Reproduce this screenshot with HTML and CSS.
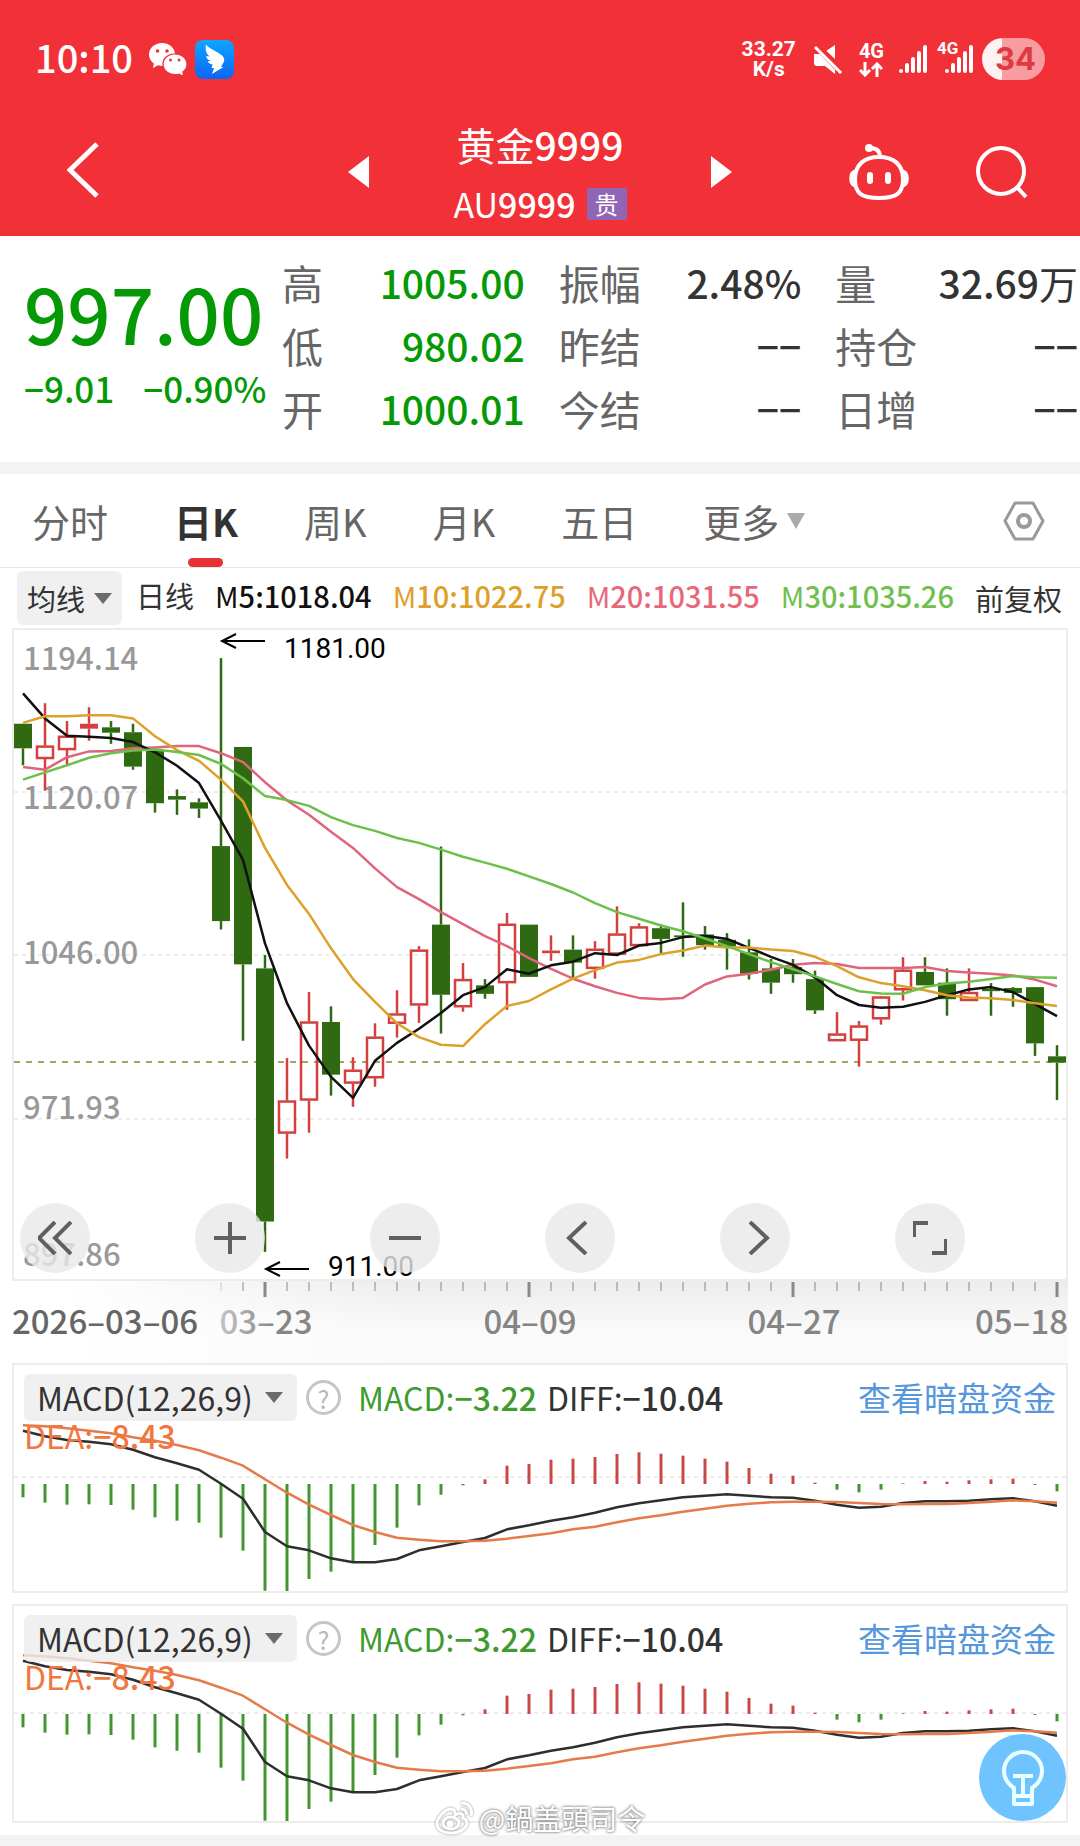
FILE: index.html
```
<!DOCTYPE html>
<html lang="zh-CN">
<head>
    <meta charset="utf-8">
    <meta name="viewport" content="width=device-width, initial-scale=1">
    <title>黄金9999</title>
    <link rel="stylesheet" href="styles.css">
</head>
<body>
    <header class="header">
        <div class="status">
            <div class="status-left">
                <span class="clock">10:10</span>
                <svg class="wechat" width="38" height="32" viewBox="0 0 38 32" fill="#fff">
                    <path d="M13 0C5.800 0 0 5 0 11.500c0 3.700 1.900 6.800 4.800 8.900L4 25l5-2.700c1.300.4 3 .6 4.600.6-1.500-7 4.400-12.800 12.400-12.500C25.300 4.400 19.900 0 13 0z"/>
                    <path d="M26 11.500c-6.400 0-11.300 4.400-11.300 9.700S19.600 31 26 31c1.400 0 2.700-.2 4-.6l4 2-.8-3.700c2.600-1.700 4.200-4.400 4.200-7.400 0-5.400-5-9.800-11.400-9.800z"/>
                    <g fill="#f23037"><circle cx="8.500" cy="8" r="1.800"/><circle cx="18" cy="8" r="1.800"/><circle cx="21.500" cy="17" r="1.500"/><circle cx="30" cy="17" r="1.500"/></g>
                </svg>
                <svg width="39" height="39" viewBox="0 0 39 39">
                    <defs><linearGradient id="wing" x1="0" y1="0" x2="0" y2="1"><stop offset="0" stop-color="#0fa6ff"/><stop offset="1" stop-color="#0b66f5"/></linearGradient></defs>
                    <rect width="39" height="39" rx="8" fill="url(#wing)"/>
                    <path d="M11 4.500c3 4.500 11 6.500 16 11 2.500 2.200 2.800 4.200 1.500 7l-2.500 4.500h2.500L17 34l2-6h-2.500l1-3.500c-3-.5-4.200-2-4.700-3.300l3-.2c-3-1-4.400-3-4.700-5l3.400.6C11 13.500 10 9 11 4.500z" fill="#fff"/>
                </svg>
            </div>
            <div class="status-right">
                <span class="speed">33.27<br>K/s</span>
                <svg width="30" height="30" viewBox="0 0 30 30" fill="#fff">
                    <path d="M22 1v14l-9-8zM1 10h7l14 15v5l-10-8H4c-2 0-3-1-3-3z"/>
                    <path d="M4 2l25 26" stroke="#f23037" stroke-width="7"/>
                    <path d="M2 3l26 26" stroke="#fff" stroke-width="3"/>
                </svg>
                <span class="net">4G
                    <svg width="24" height="15" viewBox="0 0 24 15" fill="none" stroke="#fff" stroke-width="3"><path d="M6 0v13M1 8l5 5 5-5M18 15V2M13 7l5-5 5 5"/></svg>
                </span>
                <svg width="28" height="28" viewBox="0 0 28 28" stroke="#fff" stroke-width="4" stroke-linecap="round"><path d="M2 26v0M8 20v6M14 14v12M20 8v18M26 2v24"/></svg>
                <span class="sim">
                    <span class="sim-label">4G</span>
                    <svg width="28" height="28" viewBox="0 0 28 28" stroke="#fff" stroke-width="4" stroke-linecap="round"><path d="M2 26v0M8 20v6M14 14v12M20 8v18M26 2v24"/></svg>
                </span>
                <span class="battery">34</span>
            </div>
        </div>
        <nav class="nav">
            <div class="nav-left">
                <button class="icon-btn" aria-label="返回"><svg width="32" height="56" viewBox="0 0 32 56" fill="none" stroke="#fff" stroke-width="5"><path d="M30 2L3 28l27 26"/></svg></button>
            </div>
            <div class="nav-center">
                <button class="icon-btn" aria-label="上一个"><svg width="21" height="32" viewBox="0 0 21 32" fill="#fff"><path d="M21 0v32L0 16z"/></svg></button>
                <div class="title">
                    <h1>黄金<b>9999</b></h1>
                    <p>AU<b>9999</b><span class="badge">贵</span></p>
                </div>
                <button class="icon-btn" aria-label="下一个"><svg width="21" height="32" viewBox="0 0 21 32" fill="#fff"><path d="M0 0v32l21-16z"/></svg></button>
            </div>
            <div class="nav-right">
                <button class="icon-btn" aria-label="助手">
                    <svg width="62" height="58" viewBox="0 0 62 58" fill="none" stroke="#fff" stroke-width="4">
                        <path d="M31 14c14 0 24 7 24 22s-7 19-24 19S7 51 7 36s10-22 24-22z"/>
                        <path d="M32 14c0-6-3-9-10-9" stroke-width="4"/>
                        <circle cx="21" cy="5" r="4" fill="#fff" stroke="none"/>
                        <path d="M6 28c-5 2-5 13 0 15zM56 28c5 2 5 13 0 15z" fill="#fff" stroke-width="2"/>
                        <path d="M22 32v6M40 32v6" stroke-width="6" stroke-linecap="round"/>
                    </svg>
                </button>
                <button class="icon-btn" aria-label="搜索"><svg width="53" height="54" viewBox="0 0 53 54" fill="none" stroke="#fff" stroke-width="4"><circle cx="26" cy="26" r="23"/><path d="M42 42l9 10"/></svg></button>
            </div>
        </nav>
    </header>

    <section class="quote">
        <div class="price">
            <strong class="last">997.00</strong>
            <div class="change"><span>−9.01</span><span>−0.90%</span></div>
        </div>
        <dl class="stats">
            <div class="stat up"><dt>高</dt><dd>1005.00</dd></div>
            <div class="stat"><dt>振幅</dt><dd>2.48%</dd></div>
            <div class="stat"><dt>量</dt><dd>32.69<span class="unit">万</span></dd></div>
            <div class="stat up"><dt>低</dt><dd>980.02</dd></div>
            <div class="stat"><dt>昨结</dt><dd>−−</dd></div>
            <div class="stat"><dt>持仓</dt><dd>−−</dd></div>
            <div class="stat up"><dt>开</dt><dd>1000.01</dd></div>
            <div class="stat"><dt>今结</dt><dd>−−</dd></div>
            <div class="stat"><dt>日增</dt><dd>−−</dd></div>
        </dl>
    </section>

    <nav class="tabs">
        <button class="tab">分时</button>
        <button class="tab active">日K</button>
        <button class="tab">周K</button>
        <button class="tab">月K</button>
        <button class="tab">五日</button>
        <button class="tab more">更多</button>
        <button class="icon-btn settings" aria-label="设置">
            <svg width="42" height="40" viewBox="0 0 42 40" fill="none" stroke="#999" stroke-width="3" stroke-linejoin="round"><path d="M12 2h18l10 18-10 18H12L2 20z"/><circle cx="21" cy="20" r="6" stroke-width="4"/></svg>
        </button>
    </nav>

    <div class="ma-bar">
        <label class="dropdown"><select aria-label="指标"><option>均线</option></select></label>
        <span class="ma">日线</span>
        <span class="ma m5">M<b>5:1018.04</b></span>
        <span class="ma m10">M<b>10:1022.75</b></span>
        <span class="ma m20">M<b>20:1031.55</b></span>
        <span class="ma m30">M<b>30:1035.26</b></span>
        <span class="adjust">前复权</span>
    </div>

    <main class="charts">
        <div class="kline">
            <svg id="kline" viewBox="0 0 1052 649"></svg>
            <div class="tools">
                <button class="tool" aria-label="最早"><svg viewBox="0 0 34 34"><path d="M17 1L1 17l16 16M33 1L17 17l16 16"/></svg></button>
                <button class="tool" aria-label="放大"><svg viewBox="0 0 34 34"><path d="M1 17h32M17 1v32"/></svg></button>
                <button class="tool" aria-label="缩小"><svg viewBox="0 0 34 34"><path d="M1 17h32"/></svg></button>
                <button class="tool" aria-label="左移"><svg viewBox="0 0 34 34"><path d="M23 1L6 17l17 16"/></svg></button>
                <button class="tool" aria-label="右移"><svg viewBox="0 0 34 34"><path d="M12 1l17 16-17 16"/></svg></button>
                <button class="tool" aria-label="全屏"><svg viewBox="0 0 34 34"><path d="M1 16V2h14M33 18v14H19"/></svg></button>
            </div>
        </div>

        <svg id="axis" class="axis" viewBox="0 0 1056 82">
            <defs>
                <linearGradient id="fade" gradientUnits="userSpaceOnUse" x1="200" y1="0" x2="265" y2="0"><stop offset="0" stop-color="#ccc"/><stop offset="1" stop-color="#858585"/></linearGradient>
            </defs>
            <text x="0" y="53" class="date first">2026–03–06</text>
            <text x="254" y="53" class="date fade">03–23</text>
            <text x="518" y="53" class="date">04–09</text>
            <text x="782" y="53" class="date">04–27</text>
            <text x="1056" y="53" class="date last-date">05–18</text>
        </svg>

        <section class="macd">
            <svg class="macd-plot" viewBox="0 0 1052 226" data-zero="112"></svg>
            <div class="macd-info">
                <label class="dropdown"><select aria-label="副图指标"><option>MACD(12,26,9)</option></select></label>
                <button class="help" aria-label="说明">?</button>
                <span class="v-macd">MACD:<b>−3.22</b></span>
                <span class="v-diff">DIFF:<b>−10.04</b></span>
                <a class="link" href="#">查看暗盘资金</a>
                <span class="v-dea">DEA:<b>−8.43</b></span>
            </div>
        </section>

        <section class="macd">
            <svg class="macd-plot" viewBox="0 11 1052 215" data-zero="118"></svg>
            <div class="macd-info">
                <label class="dropdown"><select aria-label="副图指标"><option>MACD(12,26,9)</option></select></label>
                <button class="help" aria-label="说明">?</button>
                <span class="v-macd">MACD:<b>−3.22</b></span>
                <span class="v-diff">DIFF:<b>−10.04</b></span>
                <a class="link" href="#">查看暗盘资金</a>
                <span class="v-dea">DEA:<b>−8.43</b></span>
            </div>
        </section>

        <button class="bulb" aria-label="提示">
            <svg width="42" height="56" viewBox="0 0 42 56" fill="none" stroke="#eaffff" stroke-width="4" stroke-linejoin="round"><path d="M12 54V38C6 34 2 29 2 21a19 19 0 0 1 38 0c0 8-4 13-10 17v16zM11 26h20M21 26v20M12 46h18"/></svg>
        </button>
        <div class="watermark">
            <svg width="40" height="34" viewBox="0 0 40 34" fill="none" stroke="#fff" stroke-width="3">
                <path d="M15 8C9 9 2 17 2 23c0 6 7 9 14 9 9 0 16-5 16-10 0-3-2-4-4-5 1-4-2-6-8-3 1-4-1-6-5-6z"/>
                <ellipse cx="16" cy="22" rx="8" ry="6"/><circle cx="15" cy="23" r="2" fill="#fff"/>
                <path d="M26 2c8 0 12 6 10 13M26 8c4 0 6 3 5 6"/>
            </svg>
            <span>@鍋盖頭司令</span>
        </div>
    </main>
    <footer class="footer"></footer>
    <script src="chart.js"></script>
</body>
</html>
```

FILE: styles.css
```
* {
    box-sizing: border-box;
}
body {
    margin: 0;
    font-family: "Noto Sans CJK SC", "Noto Sans", sans-serif;
    background: #fff;
    color: #333;
}
h1, p, dl, dd {
    margin: 0;
}
b {
    font-weight: 500;
}
button, select {
    font: inherit;
    color: inherit;
    border: none;
    background: none;
    padding: 0;
    margin: 0;
}
svg {
    display: block;
}

/* header */
.header {
    background: #f23037;
    color: #fff;
    padding: 38px 0 1px;
}
.status {
    display: flex;
    justify-content: space-between;
    height: 42px;
    padding: 0 35px;
}
.status-left, .status-right {
    display: flex;
    align-items: center;
}
.clock {
    font-size: 38px;
    line-height: 38px;
    font-weight: 500;
    padding-bottom: 4px;
}
.wechat {
    margin: 0 8px 0 16px;
}
.status-right {
    font-family: Roboto, sans-serif;
    font-weight: 700;
}
.speed {
    font-size: 21px;
    line-height: 20px;
    text-align: center;
    margin-right: 17px;
}
.net {
    display: flex;
    flex-direction: column;
    align-items: center;
    gap: 2px;
    font-size: 20px;
    line-height: 18px;
    margin: 0 15px 0 16px;
}
.sim {
    position: relative;
    margin: 0 9px 0 18px;
}
.sim-label {
    position: absolute;
    left: -8px;
    top: -5px;
    font-size: 17px;
    line-height: 17px;
}
.battery {
    width: 63px;
    height: 42px;
    border-radius: 21px;
    background: linear-gradient(90deg, #fff2f2 20px, #f99ca0 20px);
    color: #dd3a42;
    font-family: Inter, sans-serif;
    font-size: 31px;
    line-height: 42px;
    font-weight: 700;
    text-align: center;
    padding-left: 4px;
}
.nav {
    display: grid;
    grid-template-columns: 1fr 384px 1fr;
    align-items: center;
    height: 126px;
    margin-top: 29px;
}
.nav-left {
    padding-left: 67px;
}
.nav-center {
    display: flex;
    align-items: center;
    justify-content: space-between;
}
.nav-right {
    display: flex;
    align-items: center;
    justify-content: flex-end;
    gap: 65px;
    padding-right: 52px;
}
.title {
    text-align: center;
    padding-top: 3px;
}
.title h1 {
    font-size: 39px;
    line-height: 60px;
    font-weight: 400;
}
.title p {
    display: flex;
    align-items: center;
    justify-content: center;
    font-size: 34px;
    line-height: 60px;
}
.badge {
    background: #9165b5;
    border-radius: 2px;
    width: 40px;
    font-size: 24px;
    line-height: 32px;
    margin-left: 11px;
}

/* quote */
.quote {
    display: flex;
    padding: 15px 2px 22px 0;
    border-bottom: 12px solid #f4f4f6;
}
.price {
    width: 282px;
    padding: 16px 0 0 24px;
    color: #059a05;
}
.last {
    display: block;
    font-size: 76px;
    line-height: 90px;
    font-weight: 500;
}
.change {
    display: flex;
    gap: 29px;
    font-size: 35px;
    line-height: 62px;
    font-weight: 500;
}
.stats {
    flex: 1;
    display: grid;
    grid-template-columns: repeat(3, 1fr);
    column-gap: 34px;
}
.stat {
    display: flex;
    justify-content: space-between;
    line-height: 63px;
}
.stat dt {
    font-size: 41px;
    color: #666;
}
.stat dd {
    font-size: 39px;
    font-weight: 500;
}
.stat .unit {
    font-weight: 400;
}
.up dd {
    color: #059a05;
}

/* period tabs */
.tabs {
    display: flex;
    gap: 66px;
    height: 94px;
    padding: 0 35px 0 32px;
    border-bottom: 1px solid #e6e6e6;
}
.tab {
    position: relative;
    font-size: 38px;
    line-height: 93px;
    color: #666;
}
.tab.active {
    font-weight: 700;
    color: #333;
}
.tab.active::after {
    content: "";
    position: absolute;
    left: 50%;
    bottom: 0;
    width: 35px;
    height: 9px;
    margin-left: -18px;
    border-radius: 5px;
    background: #e53035;
}
.more {
    display: flex;
    align-items: center;
    gap: 8px;
}
.more::after {
    content: "";
    border: 9px solid transparent;
    border-top: 16px solid #aaa;
    border-bottom: none;
}
.settings {
    margin-left: auto;
}

/* moving average legend */
.ma-bar {
    display: flex;
    align-items: center;
    justify-content: space-between;
    height: 60px;
    padding: 0 18px 0 17px;
    font-size: 29px;
    line-height: 54px;
}
.ma {
    padding-bottom: 6px;
}
.dropdown {
    display: flex;
    align-items: center;
    gap: 8px;
    padding: 0 11px;
    border-radius: 6px;
    background: rgba(236, 236, 238, .8);
}
.ma-bar .dropdown {
    margin-right: -7px;
    padding: 0 10px;
}
.dropdown select {
    appearance: none;
    height: 54px;
}
.dropdown::after {
    content: "";
    border: 9px solid transparent;
    border-top: 11px solid #6b6b6b;
    border-bottom: none;
}
.m5 {
    color: #111;
}
.m10 {
    color: #dda02a;
}
.m20 {
    color: #e8687a;
}
.m30 {
    color: #70bf4f;
}

/* charts */
.charts {
    position: relative;
    padding: 0 12px 12px;
}
.kline, .macd {
    display: grid;
    border: 2px solid #ececec;
}
.kline > *, .macd > * {
    grid-area: 1 / 1;
}
.kline svg, .macd-plot {
    width: 100%;
}
.tools {
    align-self: end;
    display: flex;
    gap: 105px;
    padding: 0 0 6px 6px;
}
.tool {
    width: 70px;
    height: 70px;
    border-radius: 50%;
    background: rgba(232, 232, 234, .8);
}
.kline .tool svg {
    width: 34px;
    margin: auto;
    fill: none;
    stroke: #606060;
    stroke-width: 4;
}
.axis {
    width: 100%;
    background: linear-gradient(90deg, #fff 5%, transparent 38%), linear-gradient(#ececec, #fafafa 60%);
}
.date {
    font-size: 33px;
    font-weight: 500;
    fill: #858585;
    text-anchor: middle;
}
.date.first {
    fill: #666;
    text-anchor: start;
}
.date.fade {
    fill: url(#fade);
}
.date.last-date {
    text-anchor: end;
}
.y-label {
    font-size: 31px;
    font-weight: 500;
    fill: #999;
}
.mark {
    font-family: Roboto, sans-serif;
    font-size: 28px;
    fill: #000;
}
.macd + .macd {
    margin-top: 11px;
}
.macd-info {
    display: flex;
    flex-wrap: wrap;
    align-content: flex-start;
    align-items: center;
    padding: 9px 10px 0;
    font-size: 32px;
    line-height: 47px;
}
.macd .dropdown {
    padding: 0 14px 0 13px;
    gap: 12px;
}
.macd select {
    height: 47px;
}
.help {
    width: 35px;
    height: 35px;
    margin: 0 17px 0 9px;
    border: 3px solid #c6c6c6;
    border-radius: 50%;
    color: #b8b8b8;
    font-size: 25px;
    line-height: 28px;
}
.v-macd {
    color: #3f9a2f;
    margin-right: 10px;
}
.link {
    margin-left: auto;
    color: #5596dc;
    font-size: 33px;
    text-decoration: none;
}
.v-dea {
    flex-basis: 100%;
    color: #f0773f;
    line-height: 28px;
}
.bulb {
    position: absolute;
    right: 14px;
    bottom: 14px;
    width: 87px;
    height: 87px;
    border-radius: 50%;
    background: #6fc3ff;
}
.bulb svg {
    margin: auto;
}
.watermark {
    position: absolute;
    left: 0;
    right: 0;
    bottom: 0;
    display: flex;
    justify-content: center;
    gap: 4px;
    color: #fff;
    font-size: 28px;
    line-height: 34px;
    text-shadow: 0 0 3px #777, 0 0 3px #999;
}
.watermark svg {
    filter: drop-shadow(0 0 1px #888);
}
.footer {
    height: 11px;
    background: #f3f3f4;
}
```

FILE: chart.js
```
const NS = 'http://www.w3.org/2000/svg';
const STEP = 22;
const X0 = 9;

// high, body top, body bottom, low, rising
const candles = [
    [232, 232, 287, 325, 0], [186, 281, 311, 382, 1], [226, 259, 291, 323, 1], [195, 232, 243, 270, 1],
    [226, 240, 252, 277, 0], [232, 251, 328, 335, 0], [285, 293, 410, 431, 0], [379, 394, 402, 436, 0],
    [399, 408, 422, 443, 0], [85, 506, 674, 693, 0], [284, 284, 771, 942, 0], [750, 780, 1347, 1415, 0],
    [981, 1076, 1150, 1206, 1], [833, 899, 1076, 1148, 1], [865, 900, 1018, 1065, 0], [979, 1007, 1038, 1090, 1],
    [903, 933, 1026, 1045, 1], [829, 881, 904, 935, 1], [730, 738, 863, 902, 1], [507, 682, 839, 926, 0],
    [768, 804, 867, 877, 1], [804, 818, 837, 848, 0], [656, 680, 813, 873, 1], [682, 682, 799, 799, 0],
    [706, 740, 746, 763, 1], [706, 738, 767, 800, 0], [719, 736, 781, 803, 1], [641, 702, 749, 749, 1],
    [679, 686, 730, 730, 1], [682, 690, 714, 746, 0], [632, 706, 710, 754, 0], [685, 704, 728, 738, 0],
    [701, 716, 731, 783, 0], [715, 744, 792, 805, 0], [759, 780, 812, 837, 0], [759, 777, 793, 812, 0],
    [785, 804, 874, 882, 0], [878, 926, 943, 943, 1], [898, 908, 942, 1000, 1], [842, 843, 894, 906, 1],
    [755, 783, 829, 852, 1], [755, 788, 818, 818, 0], [780, 812, 849, 886, 0], [780, 833, 853, 853, 1],
    [813, 826, 831, 886, 0], [822, 824, 835, 866, 0], [822, 822, 948, 976, 0], [952, 977, 991, 1075, 0]
];

const averages = [
    ['#e0647a', [329, 335, 307, 294, 293, 287, 285, 282, 282, 298, 318, 363, 404, 436, 474, 510, 556, 598, 625, 654, 681, 708, 730, 757, 781, 803, 820, 835, 846, 849, 846, 816, 798, 792, 783, 772, 768, 770, 779, 779, 779, 777, 786, 789, 792, 796, 805, 820]],
    ['#111', [164, 220, 259, 261, 264, 273, 296, 326, 365, 449, 537, 724, 858, 953, 1023, 1070, 987, 947, 915, 880, 840, 822, 782, 792, 773, 765, 746, 750, 729, 723, 710, 707, 714, 734, 754, 772, 800, 840, 862, 868, 866, 855, 840, 827, 822, 833, 860, 887]],
    ['#dda02a', [230, 215, 215, 213, 213, 220, 260, 291, 315, 357, 406, 510, 593, 658, 735, 804, 855, 903, 934, 951, 954, 905, 864, 853, 827, 803, 784, 767, 761, 748, 740, 729, 733, 733, 738, 741, 754, 775, 800, 813, 820, 829, 840, 845, 847, 851, 858, 864]],
    ['#6cc04a', [357, 341, 325, 308, 298, 292, 290, 295, 302, 322, 354, 394, 403, 416, 441, 459, 472, 488, 499, 514, 530, 543, 557, 574, 591, 610, 634, 654, 669, 684, 697, 713, 730, 748, 766, 782, 798, 815, 831, 836, 837, 822, 814, 810, 804, 797, 800, 801]]
];

const bars = [-40, -56, -62, -61, -63, -77, -100, -110, -116, -161, -200, -320, -322, -285, -263, -234, -183, -131, -64, -32, -4, 14, 55, 60, 73, 76, 81, 90, 95, 91, 85, 76, 67, 48, 31, 25, 4, -17, -25, -17, 2, 9, 7, 11, 14, 16, -3, -22];
const diff = [483, 500, 511, 516, 524, 540, 563, 581, 600, 642, 687, 787, 830, 842, 866, 878, 878, 868, 842, 830, 817, 805, 779, 767, 753, 743, 729, 713, 701, 692, 683, 678, 674, 678, 683, 684, 693, 705, 714, 711, 700, 695, 695, 693, 689, 686, 695, 708];
const dea = [467, 470, 476, 483, 491, 503, 513, 526, 542, 564, 588, 629, 669, 705, 736, 766, 787, 804, 810, 815, 815, 813, 807, 799, 791, 779, 771, 758, 746, 737, 726, 717, 708, 702, 698, 696, 696, 697, 700, 703, 704, 703, 703, 700, 696, 692, 695, 699];

function add(svg, name, attrs, text) {
    const el = document.createElementNS(NS, name);
    for (const key in attrs) {
        el.setAttribute(key, attrs[key]);
    }
    if (text) {
        el.textContent = text;
    }
    svg.appendChild(el);
}

function line(svg, x1, y1, x2, y2, stroke, width, dash) {
    add(svg, 'line', { x1, y1, x2, y2, stroke, 'stroke-width': width, 'stroke-dasharray': dash || 'none' });
}

function curve(svg, values, scale, stroke) {
    const points = values.map((v, i) => (X0 + i * STEP) + ',' + scale(v).toFixed(1)).join(' ');
    add(svg, 'polyline', { points, fill: 'none', stroke, 'stroke-width': 2.5, 'stroke-linejoin': 'round' });
}

function drawKline() {
    const svg = document.getElementById('kline');
    const y = v => (v - 22) / 2.24;

    [384, 750, 1117].forEach(v => line(svg, 0, Math.round(y(v)), 1052, Math.round(y(v)), '#dcdcdc', 1, '4 4'));

    const labels = [['1194.14', 112], ['1120.07', 422], ['1046.00', 770], ['971.93', 1118], ['897.86', 1446]];
    labels.forEach(([text, v]) => add(svg, 'text', { x: 9, y: Math.round(y(v)), class: 'y-label' }, text));

    line(svg, 0, Math.round(y(990)), 1052, Math.round(y(990)), '#a9a062', 2, '6 6');

    candles.forEach(([high, top, bottom, low, rising], i) => {
        const x = X0 + i * STEP;
        const color = rising ? '#d24040' : '#2f6a12';
        const h = y(bottom) - y(top);
        line(svg, x, y(high), x, y(top), color, 2.5);
        line(svg, x, y(bottom), x, y(low), color, 2.5);
        if (rising && h > 6) {
            add(svg, 'rect', { x: x - 8, y: y(top) + 1, width: 16, height: h - 2, fill: 'none', stroke: color, 'stroke-width': 2.5 });
        } else {
            add(svg, 'rect', { x: x - 9, y: y(top), width: 18, height: h, fill: color });
        }
    });

    averages.forEach(([color, values]) => curve(svg, values, y, color));

    // highest and lowest price
    add(svg, 'path', { d: 'M251 11H208M222 4l-14 7 14 7', fill: 'none', stroke: '#000', 'stroke-width': 2 });
    add(svg, 'text', { x: 270, y: 28, class: 'mark' }, '1181.00');
    add(svg, 'path', { d: 'M295 639H252M266 632l-14 7 14 7', fill: 'none', stroke: '#000', 'stroke-width': 2 });
    add(svg, 'text', { x: 314, y: 646, class: 'mark' }, '911.00');
}

function drawAxis() {
    const svg = document.getElementById('axis');
    for (let i = 9; i < 48; i++) {
        const x = 11 + i * STEP;
        const major = i % 12 === 11;
        line(svg, x, 1, x, major ? 16 : 10, i === 9 ? '#ccc' : '#888', major ? 3 : 1);
    }
}

function drawMacd(svg) {
    const base = 119;
    const y = v => base + (v - 643) / 3;
    const zero = svg.dataset.zero;
    line(svg, 0, zero, 1052, zero, '#dcdcdc', 1, '4 4');
    bars.forEach((v, i) => {
        const x = X0 + i * STEP;
        line(svg, x, base, x, base - v / 3, v > 0 ? '#c84848' : '#40962f', 3);
    });
    curve(svg, diff, y, '#2e2e2e');
    curve(svg, dea, y, '#e57a4a');
}

drawKline();
drawAxis();
document.querySelectorAll('.macd-plot').forEach(drawMacd);
```
